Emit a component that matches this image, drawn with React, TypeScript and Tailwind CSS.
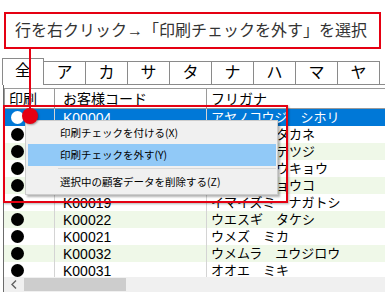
import React from "react";

const tabs = ["全", "ア", "カ", "サ", "タ", "ナ", "ハ", "マ", "ヤ"];

const rows = [
  { code: "K00004", kana: "アヤノコウジ　シホリ" },
  { code: "K00011", kana: "イシカワ　タカネ" },
  { code: "K00015", kana: "イノウエ　テツジ" },
  { code: "K00008", kana: "イトウ　ユウキョウ" },
  { code: "K00027", kana: "イマイ　キョウコ" },
  { code: "K00019", kana: "イマイズミ　ナガトシ" },
  { code: "K00022", kana: "ウエスギ　タケシ" },
  { code: "K00021", kana: "ウメズ　ミカ" },
  { code: "K00032", kana: "ウメムラ　ユウジロウ" },
  { code: "K00031", kana: "オオエ　ミキ" },
];

export default function App() {
  return (
    <div className="relative w-[385px] h-[292px] overflow-hidden bg-white font-['Liberation_Sans','Noto_Sans_CJK_JP',sans-serif] text-black">
      {/* Callout */}
      <div className="mt-[12px] ml-[4px] w-[377px] h-[37px] border-2 border-[#e50012] flex items-center pl-[9px] text-[16px] text-[#333] leading-none">
        行を右クリック→「印刷チェックを外す」を選択
      </div>

      {/* Tabs */}
      <div className="mt-[9px] h-[27px] flex items-end pl-[2px]">
        {tabs.map((t, i) =>
          i === 0 ? (
            <div
              key={t}
              className="w-[42px] h-[27px] border-l border-t border-r border-[#8a8a8a] bg-white flex items-center justify-center text-[16px] leading-none pb-[2px]"
            >
              {t}
            </div>
          ) : (
            <div
              key={t}
              className="w-[42px] h-[24px] border-t border-r border-b border-[#8a8a8a] bg-white flex items-center justify-center text-[16px] leading-none"
            >
              {t}
            </div>
          )
        )}
        <div className="flex-1 h-[24px] border-b border-[#8a8a8a]" />
      </div>

      {/* Grid */}
      <div className="ml-[3px] border-l border-[#6b6b6b] pt-[3px] flex flex-col">
        <div className="h-[21px] flex text-[14px] leading-none">
          <div className="w-[51px] border border-[#9a9a9a] pl-[4px] pt-[3px] bg-white">印刷</div>
          <div className="w-[152px] border-t border-b border-r border-[#9a9a9a] pl-[8px] pt-[3px] bg-white">お客様コード</div>
          <div className="flex-1 border-t border-b border-[#9a9a9a] pl-[4px] pt-[3px] bg-white">フリガナ</div>
        </div>
        <div className="h-[168px] overflow-hidden flex flex-col">
          {rows.map((r, i) => {
            const sel = i === 0;
            const bg = sel ? "bg-[#0078d7] text-white" : i % 2 === 0 ? "bg-[#eff8e8]" : "bg-white";
            return (
              <div key={r.code} className={`h-[17px] shrink-0 flex items-center ${bg}`}>
                <div className="w-[51px] h-full flex items-center pl-[7px] border-r border-[#d4d4d4]">
                  <div className={`w-[13px] h-[13px] rounded-full ${sel ? "bg-white" : "bg-black"}`} />
                </div>
                <div className="w-[152px] h-full flex items-center pl-[8px] border-r border-[#d4d4d4] text-[14px] leading-none">
                  {r.code}
                </div>
                <div className="flex-1 h-full flex items-center pl-[4px] text-[13px] leading-none whitespace-nowrap">
                  {r.kana}
                </div>
              </div>
            );
          })}
        </div>
        {/* Scrollbar */}
        <div className="h-[15px] bg-[#f0f0f0] flex items-center">
          <div className="w-[20px] flex items-center justify-center text-[#606060] text-[11px] leading-none">
            <svg width="6" height="9" viewBox="0 0 6 9">
              <path d="M5 0.5 L1 4.5 L5 8.5" stroke="#606060" strokeWidth="1.4" fill="none" />
            </svg>
          </div>
          <div className="w-[102px] h-[13px] bg-[#cdcdcd]" />
        </div>
      </div>

      {/* Overlays: red frame */}
      <div className="absolute left-[3px] top-[105px] w-[285px] h-[98px] border-2 border-[#e50012] shadow-[1px_1px_2px_rgba(0,0,0,0.3)]" />

      {/* Context menu */}
      <div className="absolute left-[25px] top-[120px] w-[253px] h-[75px] bg-[#f0f0f0] border border-[#cccccc] shadow-[2px_2px_2px_rgba(0,0,0,0.3)] pt-[1px] pl-[2px] pr-[1px] text-[10.5px] leading-none font-['Noto_Sans_CJK_JP',sans-serif]">
        <div className="h-[22px] flex items-center pl-[32px]">印刷チェックを付ける(X)</div>
        <div className="h-[22px] flex items-center pl-[32px] bg-[#91c9f7]">印刷チェックを外す(Y)</div>
        <div className="h-[5px] flex items-center pl-[30px]">
          <div className="w-full h-px bg-[#d7d7d7]" />
        </div>
        <div className="h-[22px] flex items-center pl-[32px]">選択中の顧客データを削除する(Z)</div>
      </div>

      {/* Connector line and dot */}
      <div className="absolute left-[29px] top-[49px] w-[2px] h-[62px] bg-[#e50012]" />
      <div className="absolute left-[22px] top-[108px] w-[16px] h-[16px] rounded-full bg-[#e50012] shadow-[1px_1px_2px_rgba(0,0,0,0.35)]" />
    </div>
  );
}
